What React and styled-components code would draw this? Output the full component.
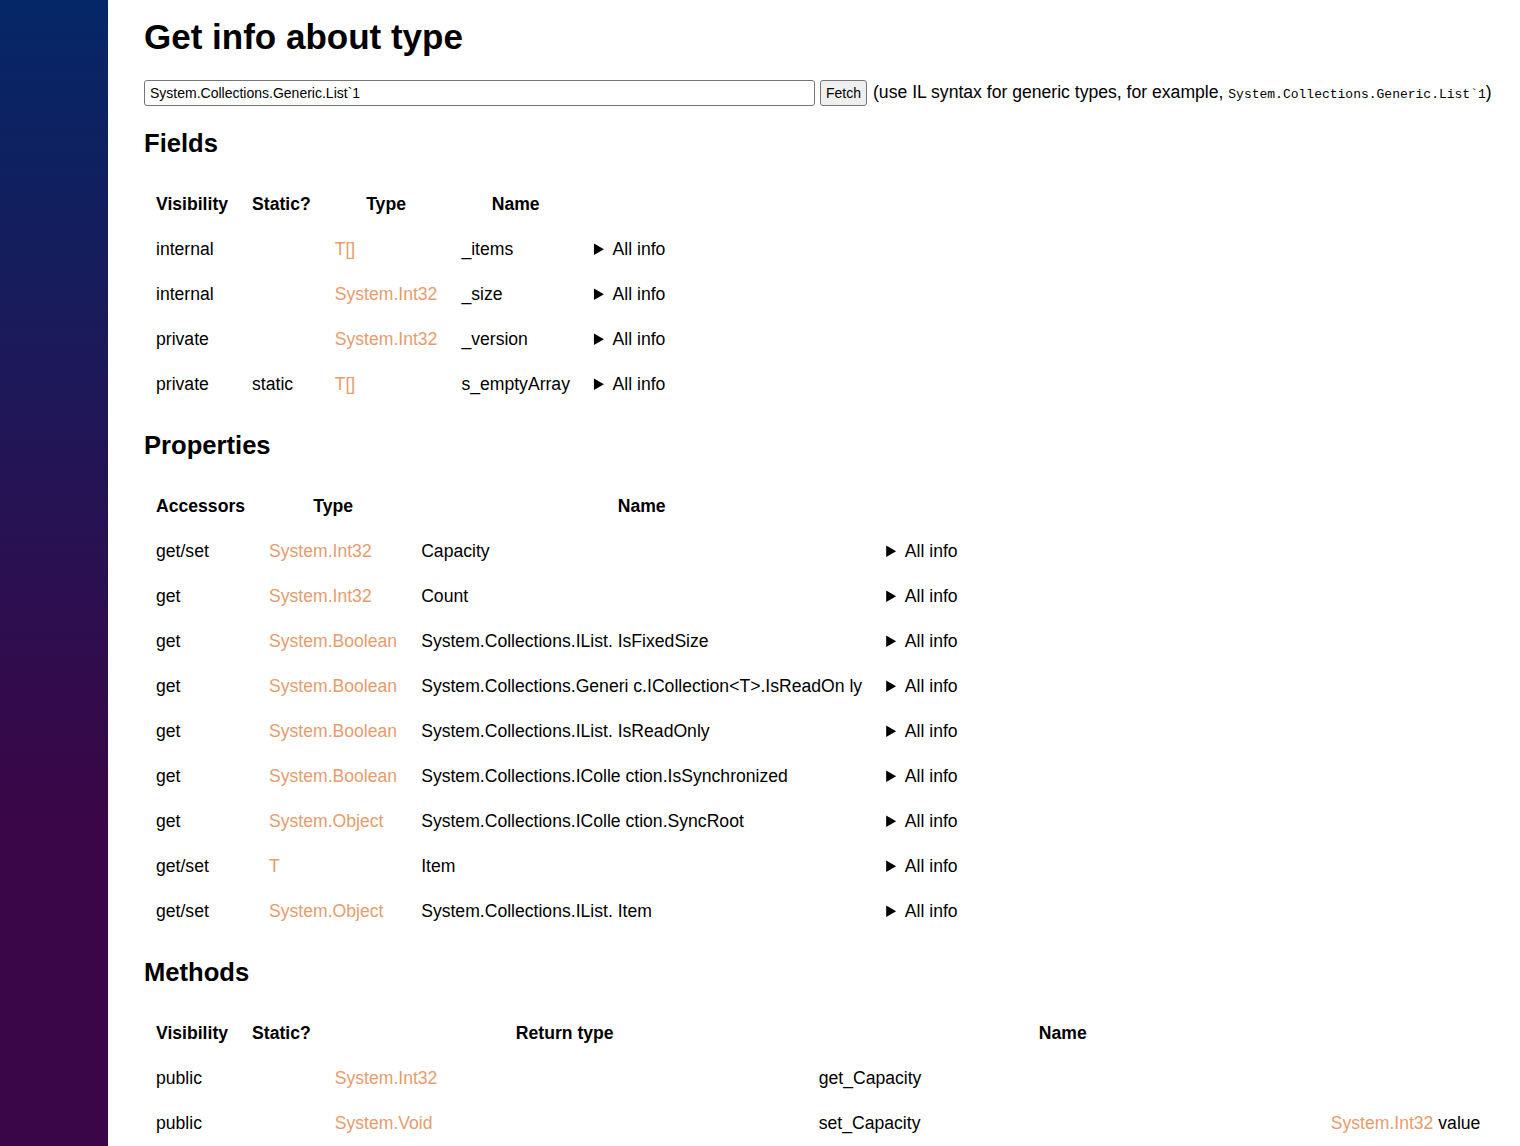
import styled, { createGlobalStyle } from 'styled-components'

const fields = [
    { visibility: 'internal', isStatic: '', type: 'T[]', name: '_items' },
    { visibility: 'internal', isStatic: '', type: 'System.Int32', name: '_size' },
    { visibility: 'private', isStatic: '', type: 'System.Int32', name: '_version' },
    { visibility: 'private', isStatic: 'static', type: 'T[]', name: 's_emptyArray' },
]

const properties = [
    { accessors: 'get/set', type: 'System.Int32', name: 'Capacity' },
    { accessors: 'get', type: 'System.Int32', name: 'Count' },
    { accessors: 'get', type: 'System.Boolean', name: 'System.Collections.IList. IsFixedSize' },
    { accessors: 'get', type: 'System.Boolean', name: 'System.Collections.Generi c.ICollection<T>.IsReadOn ly' },
    { accessors: 'get', type: 'System.Boolean', name: 'System.Collections.IList. IsReadOnly' },
    { accessors: 'get', type: 'System.Boolean', name: 'System.Collections.IColle ction.IsSynchronized' },
    { accessors: 'get', type: 'System.Object', name: 'System.Collections.IColle ction.SyncRoot' },
    { accessors: 'get/set', type: 'T', name: 'Item' },
    { accessors: 'get/set', type: 'System.Object', name: 'System.Collections.IList. Item' },
]

const methods = [
    { visibility: 'public', isStatic: '', returns: 'System.Int32', name: 'get_Capacity', params: [] },
    { visibility: 'public', isStatic: '', returns: 'System.Void', name: 'set_Capacity', params: [{ type: 'System.Int32', name: 'value' }] },
]

export default function App() {
    return (
        <>
            <GlobalStyle />
            <Page>
                <Sidebar />
                <Main>
                    <Title>Get info about type</Title>
                    <SearchRow>
                        <TypeInput defaultValue="System.Collections.Generic.List`1" />
                        <FetchButton>Fetch</FetchButton>
                        <Hint>
                            (use IL syntax for generic types, for example, <Code>System.Collections.Generic.List`1</Code>)
                        </Hint>
                    </SearchRow>

                    <SectionTitle>Fields</SectionTitle>
                    <Table>
                        <thead>
                            <tr>
                                <Th>Visibility</Th>
                                <Th>Static?</Th>
                                <Th>Type</Th>
                                <Th>Name</Th>
                            </tr>
                        </thead>
                        <tbody>
                            {fields.map((f) => (
                                <tr key={f.name}>
                                    <Td>{f.visibility}</Td>
                                    <Td>{f.isStatic}</Td>
                                    <Td><TypeLink>{f.type}</TypeLink></Td>
                                    <Td>{f.name}</Td>
                                    <Td><Details><summary>All info</summary></Details></Td>
                                </tr>
                            ))}
                        </tbody>
                    </Table>

                    <SectionTitle>Properties</SectionTitle>
                    <Table>
                        <thead>
                            <tr>
                                <Th>Accessors</Th>
                                <Th>Type</Th>
                                <Th>Name</Th>
                            </tr>
                        </thead>
                        <tbody>
                            {properties.map((p) => (
                                <tr key={p.name}>
                                    <Td>{p.accessors}</Td>
                                    <Td><TypeLink>{p.type}</TypeLink></Td>
                                    <Td>{p.name}</Td>
                                    <Td><Details><summary>All info</summary></Details></Td>
                                </tr>
                            ))}
                        </tbody>
                    </Table>

                    <SectionTitle>Methods</SectionTitle>
                    <Table>
                        <thead>
                            <tr>
                                <Th>Visibility</Th>
                                <Th>Static?</Th>
                                <Th $w={460}>Return type</Th>
                                <Th $w={488}>Name</Th>
                            </tr>
                        </thead>
                        <tbody>
                            {methods.map((m) => (
                                <tr key={m.name}>
                                    <Td>{m.visibility}</Td>
                                    <Td>{m.isStatic}</Td>
                                    <Td><TypeLink>{m.returns}</TypeLink></Td>
                                    <Td>{m.name}</Td>
                                    <Td>
                                        {m.params.map((p) => (
                                            <span key={p.name}><TypeLink>{p.type}</TypeLink> {p.name}</span>
                                        ))}
                                    </Td>
                                </tr>
                            ))}
                        </tbody>
                    </Table>
                </Main>
            </Page>
        </>
    )
}

const GlobalStyle = createGlobalStyle`
html, body {
    margin: 0;
    padding: 0;
    background: #fff;
}
body {
    font-family: "Liberation Sans", Arial, sans-serif;
    color: #000;
    overflow: hidden;
}
`

const Page = styled.div`
display: flex;
min-height: 1146px;
`

const Sidebar = styled.aside`
flex: 0 0 108px;
background-image: linear-gradient(180deg, rgb(5, 39, 103) 0%, #3a0647 70%);
`

const Main = styled.main`
flex: 1;
padding: 16px 0 0 36px;
font-size: 17.6px;
line-height: 21px;
`

const Title = styled.h1`
margin: 0 0 22px;
font-size: 35px;
line-height: 42px;
font-weight: 700;
`

const SearchRow = styled.div`
display: flex;
align-items: center;
height: 26px;
white-space: nowrap;
`

const TypeInput = styled.input`
box-sizing: border-box;
width: 671px;
height: 26px;
padding: 1px 5px;
border: 1px solid #767676;
border-radius: 3px;
font-family: "Liberation Sans", Arial, sans-serif;
font-size: 14px;
color: #000;
`

const FetchButton = styled.button`
box-sizing: border-box;
height: 26px;
margin-left: 5px;
padding: 1px 5px;
border: 1px solid #767676;
border-radius: 3px;
background: #efefef;
font-family: "Liberation Sans", Arial, sans-serif;
font-size: 14px;
color: #000;
`

const Hint = styled.span`
margin-left: 6px;
`

const Code = styled.code`
font-family: "Liberation Mono", "DejaVu Sans Mono", monospace;
font-size: 13px;
`

const SectionTitle = styled.h2`
margin: 22px 0 23px;
font-size: 25.6px;
line-height: 31px;
font-weight: 700;
`

const Table = styled.table`
border-collapse: collapse;
margin: 0 0 23px;
`

const Th = styled.th`
padding: 12px;
font-weight: 700;
text-align: center;
width: ${(p) => (p.$w ? `${p.$w}px` : 'auto')};
`

const Td = styled.td`
padding: 12px;
text-align: left;
white-space: nowrap;
`

const TypeLink = styled.span`
color: #e59d6e;
`

const Details = styled.details`
summary {
    cursor: pointer;
}
`
